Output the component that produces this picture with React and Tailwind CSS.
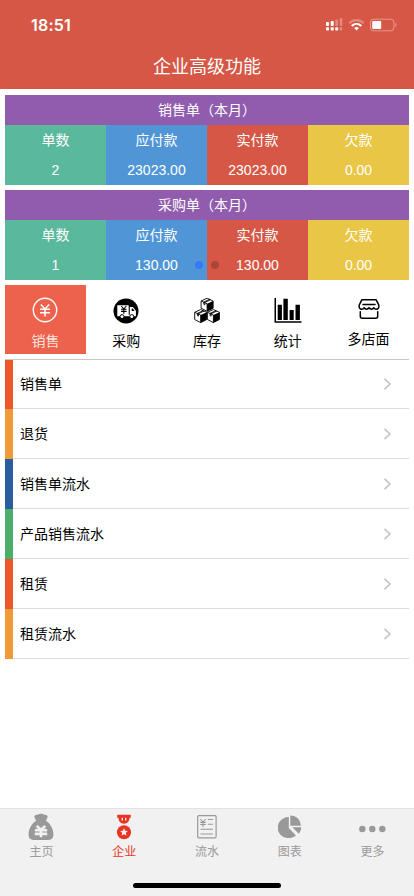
import React from 'react';

const summaries = [
  { title: '销售单（本月）', count: '2', due: '23023.00', paid: '23023.00', owed: '0.00' },
  { title: '采购单（本月）', count: '1', due: '130.00', paid: '130.00', owed: '0.00' },
];

const menu = [
  { label: '销售单', color: 'bg-[#ec5829]' },
  { label: '退货', color: 'bg-[#f19a38]' },
  { label: '销售单流水', color: 'bg-[#2a5d9f]' },
  { label: '产品销售流水', color: 'bg-[#4cae6b]' },
  { label: '租赁', color: 'bg-[#ec5829]' },
  { label: '租赁流水', color: 'bg-[#f19a38]' },
];

const SalesIcon = () => (
  <svg width="26" height="26" viewBox="0 0 26 26" fill="none" stroke="#fff">
    <circle cx="13" cy="13" r="11.7" strokeWidth="1.4" />
    <path d="M8.8 7.5 13 12l4.2-4.5M13 12v7.5M8 12.3h10M8 15.7h10" strokeWidth="1.5" />
  </svg>
);

const TruckIcon = () => (
  <svg width="26" height="26" viewBox="0 0 26 26">
    <circle cx="13" cy="13" r="12.5" fill="#000" />
    <path d="M4.3 7.2h11.4v11H4.3zM16.8 9h3.1l3 3.8v5.4h-6.1zM14 16.8h8v1.4h-8z" fill="#fff" />
    <path d="M18.7 10.4h1.1l1.8 2.5h-2.9z" fill="#000" />
    <g fill="#fff" stroke="#000" strokeWidth="1">
      <circle cx="9" cy="18.6" r="2" />
      <circle cx="18.8" cy="18.6" r="2" />
    </g>
    <path d="m8.3 8 2.5 3 2.5-3M10.8 11v4.8M8 11.3h5.6M8 13.4h5.6" fill="none" stroke="#000" strokeWidth="1.1" />
  </svg>
);

const Box = ({ x, y }) => (
  <g transform={`translate(${x} ${y})`}>
    <path d="M.5 3.3 6.5.5l6 2.8v7.2l-6 3.1-6-3.1z" fill="#fff" stroke="#000" strokeWidth=".9" strokeLinejoin="round" />
    <path d="m6.5 6 6-2.7v7.2l-6 3.1z" fill="#000" />
    <path d="m.5 3.3 6 2.7v7.6M3.1 4.4l6-2.8M4 4.8l6-2.8M3.2 4.4v2.2l1 .5V4.8" fill="none" stroke="#000" strokeWidth=".9" />
  </g>
);

const BoxesIcon = () => (
  <svg width="26" height="26" viewBox="0 0 26 26">
    <Box x={6.6} y={-0.3} />
    <Box x={0.2} y={11} />
    <Box x={12.9} y={11} />
  </svg>
);

const ChartIcon = () => (
  <svg width="28" height="26" viewBox="0 0.5 28 26">
    <path d="M.5 0H2v23.8h25.500v1.500H.5zM3.700 7.300h4.200v15.200H3.700zM9.400 1.300h4.400v21.200H9.400zM15.600 12.400h4.100v10.100h-4.100zM21.500 7.300h4.400v15.200h-4.400z" />
  </svg>
);

const StoreIcon = () => (
  <svg width="24" height="22" viewBox="0 0 24 22" fill="none" stroke="currentColor" strokeWidth="1.5" strokeLinecap="round" strokeLinejoin="round">
    <path d="M4.8 1.8h14.400l2.600 5.400c.5 2.200-.6 4-2.500 4-1.200 0-2-.6-2.400-1.500-.5.9-1.300 1.500-2.400 1.500s-2-.6-2.500-1.500c-.5.9-1.400 1.500-2.500 1.500s-1.900-.6-2.400-1.500c-.4.9-1.200 1.500-2.400 1.500-1.900 0-3-1.800-2.500-4z" />
    <path d="M6 6.500h12M3.300 13.700v4.500c0 1.300.7 2 2 2h13.400c1.300 0 2-.7 2-2v-4.500" />
  </svg>
);

const BagIcon = () => (
  <svg width="26" height="28" viewBox="0 0 26 28">
    <path d="M7.200 2.300c1-.8 2.200-.4 3-.8C11.300.5 14.700.5 15.800 1.500c.8.4 2 0 3 .8 1.200.9 1 1.800.3 2.900L17.900 7.700c4.600 2.600 7.500 8.600 7.500 13.600 0 3.600-1.700 5.700-4.800 5.700H5.400C2.300 27 .6 24.900.6 21.300c0-5 2.900-11 7.500-13.600L6.900 5.200c-.7-1.100-.9-2 .3-2.900z" fill="currentColor" />
    <path d="m8.700 13 4.300 3.800 4.300-3.800M13 16.500v7.700M6.800 17.300h12.400M6.800 20.900h12.400" fill="none" stroke="#f1f1f1" strokeWidth="2.600" />
  </svg>
);

const MedalIcon = () => (
  <svg width="16" height="26" viewBox="0 0 16 26">
    <path d="M1.200.8h13.600v3h-1.300c0 3.500-2.200 5.900-5.500 5.900S2.500 7.300 2.500 3.800H1.200z" fill="currentColor" />
    <circle cx="8" cy="18.2" r="7" fill="currentColor" />
    <path d="M6.300 3.800v2.600M9.700 3.800v2.600" stroke="#f1f1f1" strokeWidth="1.3" />
    <path d="m8 14.200 1.150 2.500 2.750.3-2.050 1.850.6 2.700L8 20.150l-2.450 1.400.6-2.700L4.100 17l2.750-.3z" fill="#f1f1f1" />
  </svg>
);

const ReceiptIcon = () => (
  <svg width="20" height="24" viewBox="0 0 20 24" fill="none" stroke="currentColor">
    <rect x=".7" y=".7" width="18.4" height="22.1" rx="1" strokeWidth="1.2" />
    <path d="M3.300 4 6 7l2.700-3M6 7v5M3.200 7.400h5.600M3.200 9.500h5.600M10.800 4.500H16M10.800 9.200H16M3.500 14.300H16M3.500 19H16" strokeWidth="1.1" />
  </svg>
);

const PieIcon = () => (
  <svg width="24" height="24" viewBox="0 0 24 24" fill="currentColor">
    <path d="M10.800 2.100v10.800l7.100 7.600A11 10.500 0 1 1 10.800 2.100zM12.300.6c6 0 10.200 4.200 10.500 10.100H12.300zM14.300 12.300h8.900c0 2.600-.9 4.700-2.400 6.500z" />
  </svg>
);

const DotsIcon = () => (
  <svg width="28" height="12" viewBox="0 0 28 12" fill="currentColor">
    <circle cx="3.3" cy="8" r="3.2" />
    <circle cx="13.3" cy="8" r="3.2" />
    <circle cx="23.3" cy="8" r="3.2" />
  </svg>
);

const categories = [
  { label: '销售', icon: SalesIcon, active: true },
  { label: '采购', icon: TruckIcon },
  { label: '库存', icon: BoxesIcon },
  { label: '统计', icon: ChartIcon },
  { label: '多店面', icon: StoreIcon, raised: true },
];

const tabs = [
  { label: '主页', icon: BagIcon },
  { label: '企业', icon: MedalIcon, active: true },
  { label: '流水', icon: ReceiptIcon },
  { label: '图表', icon: PieIcon },
  { label: '更多', icon: DotsIcon },
];

function StatusIcons() {
  return (
    <svg width="74" height="16" viewBox="0 0 74 16" fill="#fff">
      <rect x="1" y="5" width="3" height="4" rx=".8" />
      <rect x="5.7" y="4" width="3" height="5" rx=".8" />
      <g opacity=".3">
        <rect x="10.3" y="2.5" width="2.7" height="6.5" rx=".8" />
        <rect x="14.7" y="1" width="2.7" height="8" rx=".8" />
        <rect x="14.7" y="10.3" width="2.7" height="3.2" rx=".8" />
      </g>
      <rect x="1" y="10.3" width="3" height="3.2" rx=".8" />
      <rect x="5.7" y="10.3" width="3" height="3.2" rx=".8" />
      <rect x="10.2" y="10.3" width="3" height="3.2" rx=".8" />
      <g fill="none" stroke="#fff" strokeWidth="2.2">
        <path d="M24.200 6.300c4.200-4.200 10.400-4.200 14.600 0" opacity=".3" />
        <path d="M26.700 9c2.800-2.700 6.800-2.700 9.600 0" />
      </g>
      <path d="m31.500 13.500-2.400-2.500c1.400-1.200 3.400-1.200 4.800 0z" />
      <rect x="45.5" y="2.2" width="23.4" height="11.6" rx="3" fill="none" stroke="#fff" opacity=".4" />
      <rect x="47.2" y="3.9" width="9" height="8.2" rx="1" />
      <path d="M70.400 6c1.600.5 1.600 3.500 0 4z" opacity=".4" />
    </svg>
  );
}

function Cell({ label, value, className }) {
  return (
    <div className={`h-[60px] flex-1 ${className}`}>
      <div className="h-[30px] leading-[30px]">{label}</div>
      <div className="h-[30px] leading-[31px]">{value}</div>
    </div>
  );
}

function Summary({ data }) {
  return (
    <div className="text-center text-sm text-white">
      <div className="h-[30px] bg-[#915cae] leading-[30px]">{data.title}</div>
      <div className="flex">
        <Cell label="单数" value={data.count} className="bg-[#5ab99d]" />
        <Cell label="应付款" value={data.due} className="bg-[#5096d6]" />
        <Cell label="实付款" value={data.paid} className="bg-[#d65745]" />
        <Cell label="欠款" value={data.owed} className="bg-[#e9c645]" />
      </div>
    </div>
  );
}

export default function App() {
  return (
    <div className="flex h-[896px] w-[414px] flex-col overflow-hidden bg-white font-['Liberation_Sans','Noto_Sans_CJK_SC',sans-serif] text-black">
      <header className="h-[89px] shrink-0 bg-[#d65745] text-white">
        <div className="flex h-[50px] items-center justify-between pr-[15px] pl-[31px]">
          <span className="font-['Inter',sans-serif] text-base font-semibold tracking-[0.2px]">18:51</span>
          <StatusIcons />
        </div>
        <h1 className="text-center text-lg leading-[34px]">企业高级功能</h1>
      </header>

      <main className="flex-1 px-[5px] pt-1.5">
        <div className="relative flex flex-col gap-[5px]">
          {summaries.map((s) => (
            <Summary key={s.title} data={s} />
          ))}
          <div className="absolute inset-x-0 bottom-[11px] flex justify-center gap-2">
            <i className="h-2 w-2 rounded-full bg-[#347af6]" />
            <i className="h-2 w-2 rounded-full bg-[#ab4637]" />
          </div>
        </div>

        <div className="mt-[5px] flex h-[75px] border-b border-[#c8c8c8]">
          {categories.map(({ label, icon: Icon, active, raised }) => (
            <div
              key={label}
              className={`flex h-[69px] flex-1 flex-col items-center text-sm ${active ? 'bg-[#ec624c] text-[#fbe4df]' : ''}`}
            >
              <div className={`flex h-[26px] items-center ${raised ? 'mt-[11px]' : active ? 'mt-3' : 'mt-[13px]'}`}>
                <Icon />
              </div>
              <span className={`leading-5 ${raised ? 'mt-[7px]' : active ? 'mt-2' : 'mt-[7px]'}`}>{label}</span>
            </div>
          ))}
        </div>

        <ul>
          {menu.map((item, i) => (
            <li key={item.label} className={`flex ${i === 0 ? 'h-[49px]' : 'h-[50px]'}`}>
              <div className={`w-2 ${item.color}`} />
              <div className="flex flex-1 items-center justify-between border-b border-[#dcdcdc] pr-[17px] pl-[7px] text-sm">
                <span>{item.label}</span>
                <svg width="9" height="14" viewBox="0 0 9 14" fill="none" stroke="#c3c3c5" strokeWidth="1.6">
                  <path d="m1.500 1.800 5.500 5.200-5.500 5.200" />
                </svg>
              </div>
            </li>
          ))}
        </ul>
      </main>

      <nav className="flex h-[88px] shrink-0 flex-col border-t border-[#e3e3e3] bg-[#f1f1f1]">
        <div className="flex">
          {tabs.map(({ label, icon: Icon, active }) => (
            <div
              key={label}
              className={`flex flex-1 flex-col items-center text-xs ${active ? 'text-[#e93323]' : 'text-[#999999]'}`}
            >
              <div className="mt-1 flex h-7 items-center">
                <Icon />
              </div>
              <span className="mt-0.5 leading-[18px]">{label}</span>
            </div>
          ))}
        </div>
        <div className="mx-auto mt-auto mb-2 h-[5px] w-[148px] rounded-full bg-black" />
      </nav>
    </div>
  );
}
